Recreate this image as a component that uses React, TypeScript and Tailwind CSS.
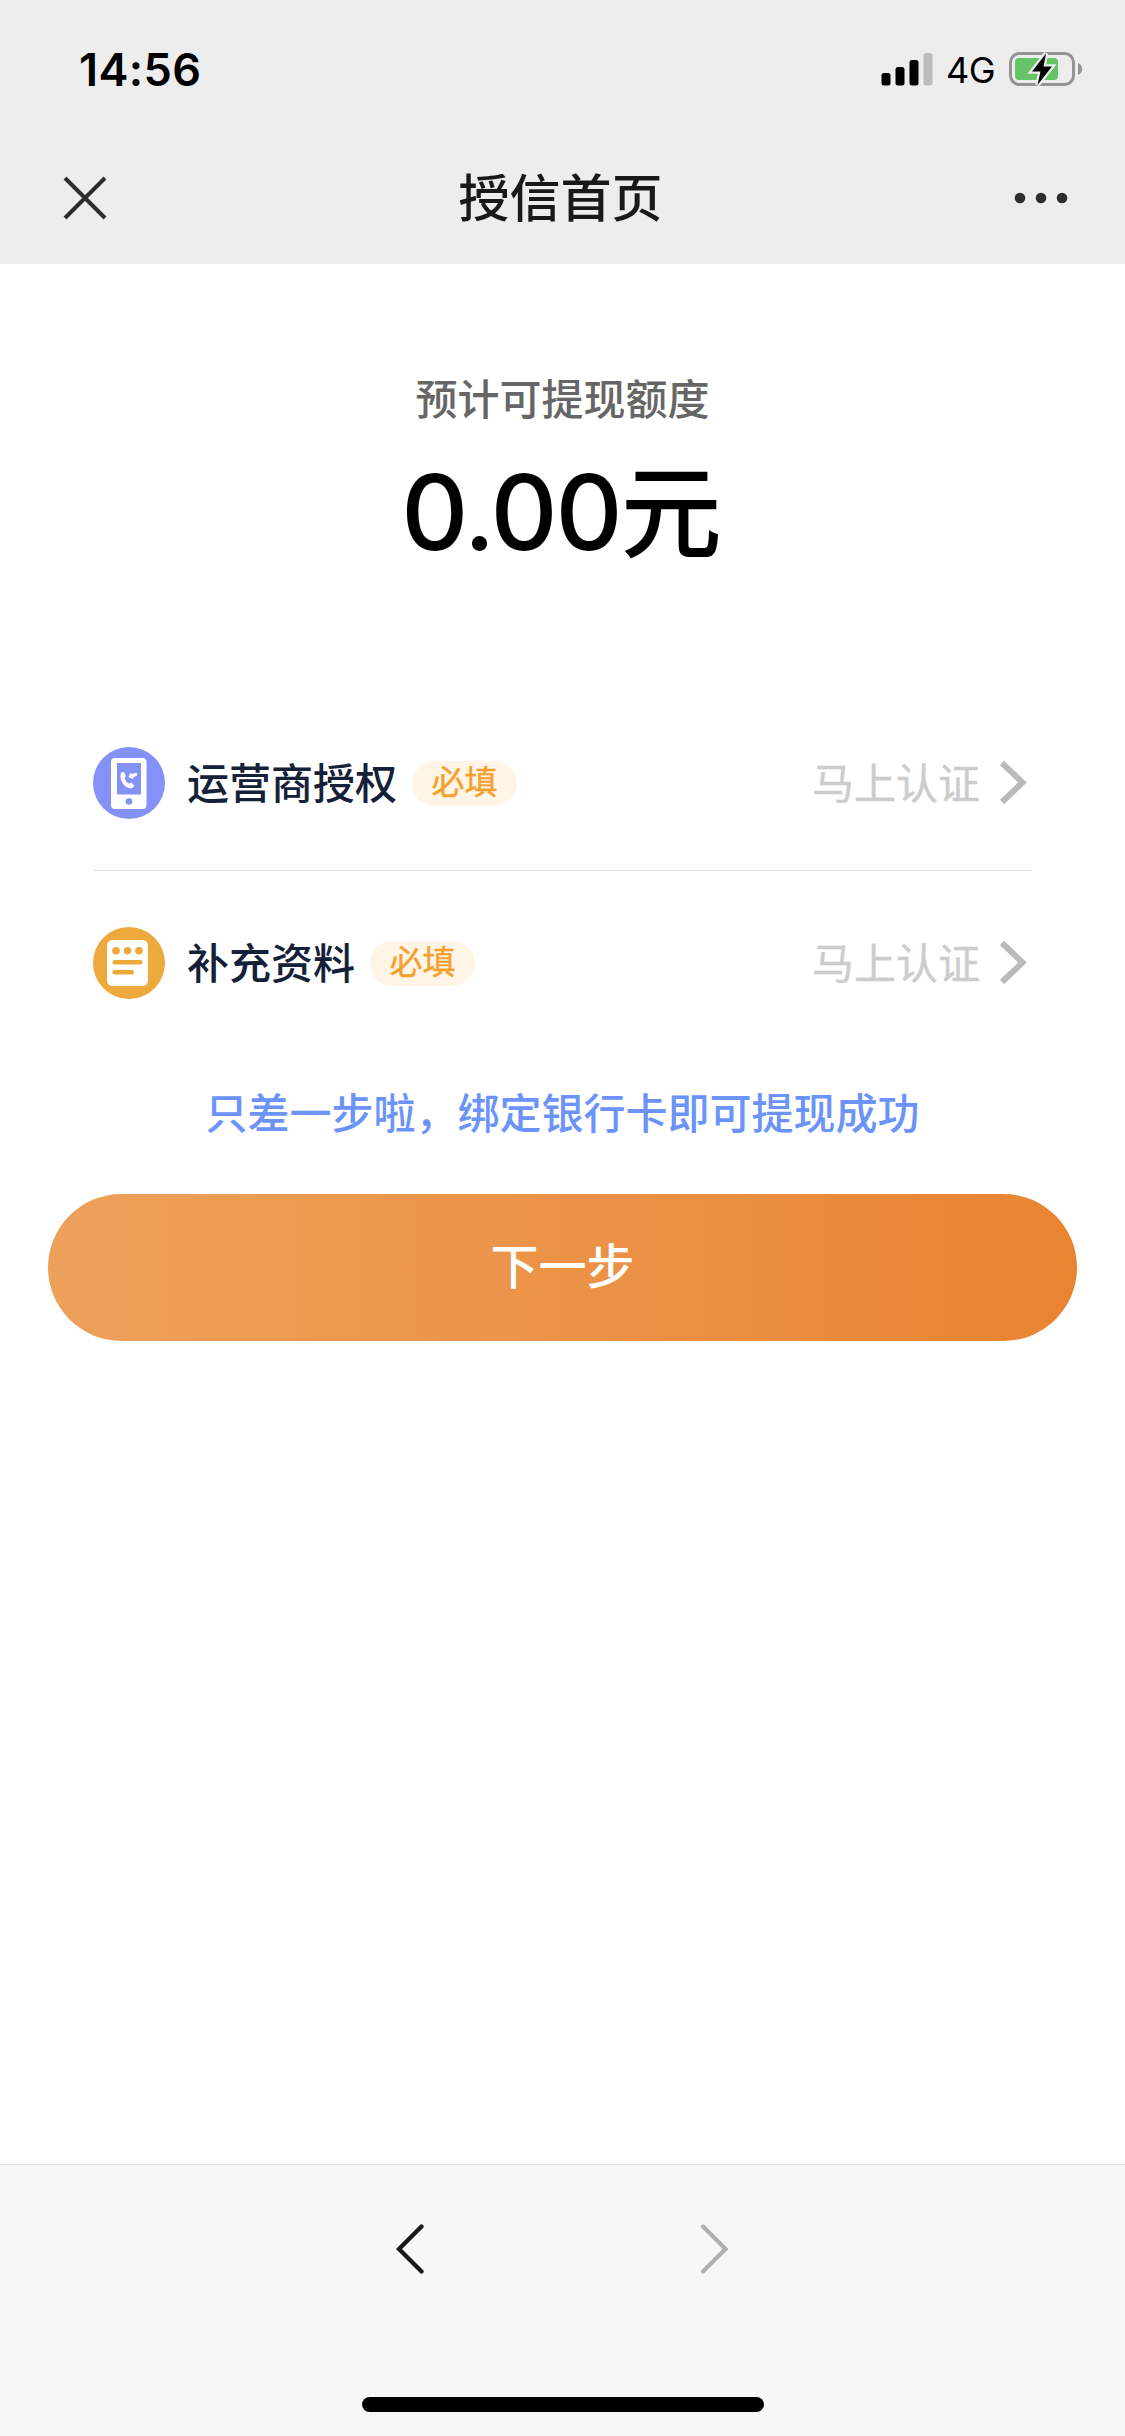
const StatusBar = () => {
  return (
    <div className="flex h-[132px] items-center justify-between pl-[79px] pr-[42px] pt-[6px]">
      <span className="font-['Inter'] text-[45px] leading-none font-semibold tracking-[0.4px] text-black">
        14:56
      </span>
      <div className="flex items-center">
        <svg width="52" height="34" viewBox="0 0 52 34">
          <rect x="0.500" y="21" width="9" height="12.500" rx="2.500" />
          <rect x="14.500" y="15" width="9" height="18.500" rx="2.500" />
          <rect x="28.500" y="8" width="9" height="25.500" rx="2.500" />
          <rect x="42.500" y="1" width="9" height="32.500" rx="2.500" fill="#bcbcbc" />
        </svg>
        <span className="ml-[13px] w-[51px] pt-px font-['Inter'] text-[36px] leading-none tracking-[-0.5px] text-black">
          4G
        </span>
        <svg className="ml-3" width="74" height="36" viewBox="0 0 74 36">
          <rect x="1.500" y="2.500" width="63" height="31" rx="9" fill="none" stroke="#949494" strokeWidth="3" />
          <path d="M69 12c5.500 2 5.500 10 0 12z" fill="#949494" />
          <rect x="6" y="7" width="43" height="22" rx="4" fill="#65c466" />
          <path
            d="M37 2.500 L23 20.500 H31.500 L28.500 34 L43 15.500 H34.500 Z"
            fill="#000"
            stroke="#ededed"
            strokeWidth="4.500"
            paintOrder="stroke"
          />
        </svg>
      </div>
    </div>
  );
};

const NavBar = () => {
  return (
    <div className="flex h-[132px] items-center justify-between pl-[62px] pr-[57px]">
      <svg width="46" height="46" viewBox="0 0 46 46" stroke="#2d2d2d" strokeWidth="4">
        <path d="M3 3 L43 43 M43 3 L3 43" />
      </svg>
      <h1 className="pb-[5px] pr-px text-[51px] leading-none font-medium text-[#191919]">授信首页</h1>
      <svg width="54" height="12" viewBox="0 0 54 12" fill="#2d2d2d">
        <circle cx="6" cy="6" r="5.300" />
        <circle cx="27" cy="6" r="5.300" />
        <circle cx="48" cy="6" r="5.300" />
      </svg>
    </div>
  );
};

const PhoneIcon = () => (
  <svg width="72" height="72" viewBox="0 0 72 72">
    <circle cx="36" cy="36" r="36" fill="#8492f8" />
    <rect x="18" y="11" width="35.500" height="51" rx="4" fill="#fff" />
    <rect x="24" y="16" width="24" height="31.500" fill="#8492f8" />
    <circle cx="36" cy="54.500" r="3.300" fill="#8492f8" />
    <path
      d="M28.500 25.500c1-.8 2.300-.6 3 .4l1.300 2.700c.3 1-.9 1.700-1.200 2.500.5 2.400 2 4.400 4.200 5.500 1-.2 1.800-1.200 2.900-.6l2 1.700c.8.900.4 2.200-.7 2.900-4 1.800-8.600-1.200-10.800-5.200-1.800-3.500-2.500-8-.7-9.900z"
      fill="#fff"
    />
    <path d="M35.500 30.500l1.500-4.500 2 1 4.500-1.500.7 3-4.200 2 .5 1.500z" fill="#fff" />
  </svg>
);

const FormIcon = () => (
  <svg width="72" height="72" viewBox="0 0 72 72">
    <circle cx="36" cy="36" r="36" fill="#eda93b" />
    <rect x="14" y="13" width="41" height="46" rx="5.500" fill="#fff" />
    <g fill="#eda93b">
      <circle cx="23" cy="23.700" r="3.800" />
      <circle cx="34.500" cy="23.700" r="3.800" />
      <circle cx="46" cy="23.700" r="3.800" />
      <rect x="19.500" y="33" width="30" height="4.500" rx="2.200" />
      <rect x="19.500" y="43" width="21.500" height="4.500" rx="2.200" />
    </g>
  </svg>
);

const Row = ({ icon, title }: { icon: React.ReactNode; title: string }) => {
  return (
    <div className="flex h-[180px] items-center">
      {icon}
      <span className="ml-[22px] pb-[5px] text-[42px] leading-none font-medium text-[#152039]">{title}</span>
      <span className="ml-[15px] flex h-[45px] w-[105px] items-center justify-center rounded-full bg-[#fef5e6] pb-[6px] text-[33px] leading-none text-[#f5a02d] [-webkit-text-stroke:0.4px_#f5a02d]">
        必填
      </span>
      <span className="ml-auto pb-[5px] text-[42px] leading-none text-[#cccccc] [-webkit-text-stroke:0.4px_#cccccc]">
        马上认证
      </span>
      <svg className="ml-[18px] mr-[4px]" width="30" height="46" viewBox="0 0 30 46">
        <path d="M4 3 L24.500 22.500 L4 42" fill="none" stroke="#bababa" strokeWidth="6" />
      </svg>
    </div>
  );
};

const App = () => {
  return (
    <div className="flex h-[2436px] w-[1125px] flex-col bg-white font-['Noto_Sans_CJK_SC',sans-serif]">
      <header className="bg-[#ededed]">
        <StatusBar />
        <NavBar />
      </header>

      <main className="flex flex-1 flex-col">
        <div className="flex h-[429px] flex-col items-center pt-[112px]">
          <p className="text-[42px] leading-none font-medium text-[#666666]">预计可提现额度</p>
          <p className="mt-[38px] flex items-baseline pr-[2px] text-[101px] leading-none font-medium text-black">
            <span className="font-['Inter'] text-[104px] leading-none tracking-[-2px]">0.00</span>
            <span>元</span>
          </p>
        </div>

        <div className="px-[93px]">
          <Row icon={<PhoneIcon />} title="运营商授权" />
          <div className="-mt-[3px] mb-[2px] h-px bg-[#dfe0e0]" />
          <Row icon={<FormIcon />} title="补充资料" />
        </div>

        <p className="mt-[37px] text-center text-[42px] leading-none font-medium text-[#6b93fa]">
          只差一步啦，绑定银行卡即可提现成功
        </p>
        <button className="mx-[48px] mt-[62px] h-[147px] rounded-full bg-gradient-to-r from-[#eea15b] to-[#e98431] pb-[9px] text-[48px] leading-none font-medium text-white">
          下一步
        </button>
      </main>

      <footer className="flex h-[272px] flex-col items-center border-t border-[#e2e2e2] bg-[#f7f7f7]">
        <div className="flex h-[168px] items-center gap-[273px]">
          <svg width="30" height="52" viewBox="0 0 30 52">
            <path
              d="M25.500 3.500 L3 26 L25.500 48.500"
              fill="none"
              stroke="#191919"
              strokeWidth="4.300"
              strokeLinecap="round"
            />
          </svg>
          <svg width="30" height="52" viewBox="0 0 30 52">
            <path
              d="M4 3.500 L26.500 26 L4 48.500"
              fill="none"
              stroke="#b0b0b0"
              strokeWidth="4.300"
              strokeLinecap="round"
            />
          </svg>
        </div>
        <div className="mt-[64px] h-[15px] w-[402px] rounded-full bg-black" />
      </footer>
    </div>
  );
};

export default App;
